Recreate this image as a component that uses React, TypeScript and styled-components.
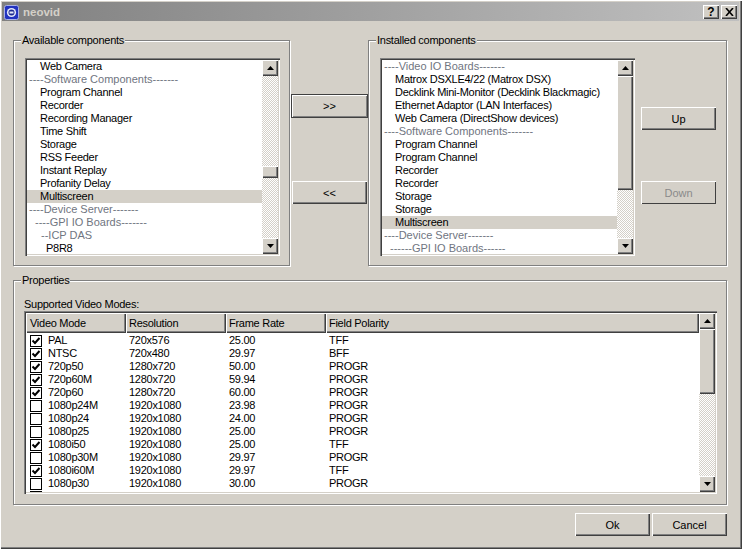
import React from 'react';
import styled, { createGlobalStyle } from 'styled-components';

const Global = createGlobalStyle`
  html, body {
    margin: 0;
    padding: 0;
    background: #d4d0c8;
  }
  * {
    box-sizing: border-box;
  }
`;

const face = '#d4d0c8';
const raised = `inset 1px 1px 0 #fff, inset -1px -1px 0 #404040, inset -2px -2px 0 #808080`;
const sunken = `inset 1px 1px 0 #808080, inset 2px 2px 0 #404040, inset -1px -1px 0 #fff, inset -2px -2px 0 ${face}`;

const Window = styled.div`
  width: 742px;
  height: 549px;
  display: flex;
  flex-direction: column;
  background: ${face};
  font-family: 'Liberation Sans', Arial, sans-serif;
  font-size: 11px;
  letter-spacing: -0.27px;
  color: #000;
  overflow: hidden;
  box-shadow: inset 1px 1px 0 #fff, inset -1px -1px 0 #404040, inset -2px -2px 0 #808080;
  padding: 2px 3px 0 2px;
`;

const TitleBar = styled.div`
  height: 19px;
  flex: none;
  display: flex;
  align-items: center;
  padding: 0 2px;
  background: linear-gradient(90deg, #808080, #c0c0c0);
`;

const AppIcon = styled.svg`
  width: 15px;
  height: 15px;
  flex: none;
  margin-top: 1px;
`;

const TitleText = styled.span`
  margin-left: 4px;
  flex: 1;
  font-weight: bold;
  font-size: 11.5px;
  letter-spacing: 0;
  color: ${face};
`;

const CaptionButton = styled.div`
  width: 16px;
  height: 14px;
  margin: 1px 0 0 2px;
  background: ${face};
  box-shadow: ${raised};
  display: flex;
  align-items: center;
  justify-content: center;
  font-weight: bold;
  font-size: 12px;
  line-height: 12px;
  letter-spacing: 0;
  color: #000;
`;

const Body = styled.div`
  flex: 1;
  display: flex;
  flex-direction: column;
  padding: 19px 12px 0 11px;
`;

const TopRow = styled.div`
  display: flex;
  height: 226px;
  flex: none;
`;

const Group = styled.div<{ $width?: number }>`
  ${p => (p.$width ? `width: ${p.$width}px; flex: none;` : 'flex: 1;')}
  height: 100%;
  border: 1px solid #808080;
  box-shadow: inset 1px 1px 0 #fff, 1px 1px 0 #fff;
  display: flex;
  flex-direction: column;
`;

const GroupTitle = styled.div`
  align-self: flex-start;
  margin: -7px 0 0 7px;
  padding: 0 1px;
  height: 13px;
  line-height: 13px;
  background: ${face};
  color: #000;
`;

const MiddleColumn = styled.div`
  width: 78px;
  flex: none;
  display: flex;
  flex-direction: column;
  padding: 54px 0 0 2px;
`;

const Button = styled.div<{ $disabled?: boolean; $mt?: number; $h?: number }>`
  width: 75px;
  height: ${p => p.$h ?? 23}px;
  flex: none;
  margin-top: ${p => p.$mt ?? 0}px;
  background: ${face};
  box-shadow: ${p =>
    p.$disabled ? 'inset 1px 1px 0 #fff, inset -1px -1px 0 #404040' : raised};
  display: flex;
  align-items: center;
  justify-content: center;
  color: ${p => (p.$disabled ? '#8a8a8a' : '#000')};
  font-size: 11px;
  letter-spacing: 0;
`;

const DefaultButton = styled(Button)`
  width: 77px;
  margin-left: -1px;
  box-shadow: inset 0 0 0 1px #404040, inset 2px 2px 0 #fff, inset -2px -2px 0 #808080;
`;

const ListBody = styled.div<{ $right?: number }>`
  flex: 1;
  display: flex;
  padding: 11px ${p => p.$right ?? 0}px 0 11px;
  min-height: 0;
`;

const SideButtons = styled.div`
  width: 75px;
  margin-left: 6px;
  display: flex;
  flex-direction: column;
  padding-top: 49px;
`;

const Sunken = styled.div<{ $w?: number; $h: number }>`
  width: ${p => (p.$w ? `${p.$w}px` : '100%')};
  height: ${p => p.$h}px;
  flex: none;
  display: flex;
  background: #fff;
  padding: 2px;
  box-shadow: ${sunken};
  overflow: hidden;
`;

const ListRows = styled.div`
  flex: 1;
  min-width: 0;
  overflow: hidden;
`;

const Row = styled.div<{ $indent: number; $selected?: boolean; $muted?: boolean }>`
  height: 13px;
  line-height: 13px;
  padding-left: ${p => p.$indent}px;
  white-space: nowrap;
  background: ${p => (p.$selected ? face : 'transparent')};
  color: ${p => (p.$muted ? '#70757f' : '#000')};
  letter-spacing: ${p => (p.$muted ? '0' : '-0.27px')};
`;

const ScrollBar = styled.div`
  width: 16px;
  flex: none;
  display: flex;
  flex-direction: column;
  height: 100%;
`;

const ScrollButton = styled.div`
  height: 16px;
  flex: none;
  background: ${face};
  box-shadow: ${raised};
  display: flex;
  align-items: center;
  justify-content: center;
`;

const Track = styled.div`
  flex: 1;
  min-height: 0;
  background: repeating-conic-gradient(${face} 0 25%, #fff 0 50%) 0 0 / 2px 2px;
`;

const Thumb = styled.div<{ $top: number; $h: number }>`
  margin-top: ${p => p.$top}px;
  height: ${p => p.$h}px;
  background: ${face};
  box-shadow: ${raised};
`;

const Arrow = ({ up }: { up?: boolean }) => (
  <svg width="7" height="4" viewBox="0 0 7 4">
    <path d={up ? 'M3.5 0L7 4H0Z' : 'M0 0H7L3.5 4Z'} fill="#000" />
  </svg>
);

const Scroller = ({ top, height }: { top: number; height: number }) => (
  <ScrollBar>
    <ScrollButton>
      <Arrow up />
    </ScrollButton>
    <Track>
      <Thumb $top={top} $h={height} />
    </Track>
    <ScrollButton>
      <Arrow />
    </ScrollButton>
  </ScrollBar>
);

type Item = { text: string; indent: number; muted?: boolean; selected?: boolean };

const available: Item[] = [
  { text: 'Web Camera', indent: 13 },
  { text: '----Software Components-------', indent: 2, muted: true },
  { text: 'Program Channel', indent: 13 },
  { text: 'Recorder', indent: 13 },
  { text: 'Recording Manager', indent: 13 },
  { text: 'Time Shift', indent: 13 },
  { text: 'Storage', indent: 13 },
  { text: 'RSS Feeder', indent: 13 },
  { text: 'Instant Replay', indent: 13 },
  { text: 'Profanity Delay', indent: 13 },
  { text: 'Multiscreen', indent: 13, selected: true },
  { text: '----Device Server-------', indent: 2, muted: true },
  { text: '----GPI IO Boards-------', indent: 8, muted: true },
  { text: '--ICP DAS', indent: 14, muted: true },
  { text: 'P8R8', indent: 19 },
];

const installed: Item[] = [
  { text: '----Video IO Boards-------', indent: 2, muted: true },
  { text: 'Matrox DSXLE4/22 (Matrox DSX)', indent: 13 },
  { text: 'Decklink Mini-Monitor (Decklink Blackmagic)', indent: 13 },
  { text: 'Ethernet Adaptor (LAN Interfaces)', indent: 13 },
  { text: 'Web Camera (DirectShow devices)', indent: 13 },
  { text: '----Software Components-------', indent: 2, muted: true },
  { text: 'Program Channel', indent: 13 },
  { text: 'Program Channel', indent: 13 },
  { text: 'Recorder', indent: 13 },
  { text: 'Recorder', indent: 13 },
  { text: 'Storage', indent: 13 },
  { text: 'Storage', indent: 13 },
  { text: 'Multiscreen', indent: 13, selected: true },
  { text: '----Device Server-------', indent: 2, muted: true },
  { text: '------GPI IO Boards------', indent: 8, muted: true },
];

const modes: [boolean, string, string, string, string][] = [
  [true, 'PAL', '720x576', '25.00', 'TFF'],
  [true, 'NTSC', '720x480', '29.97', 'BFF'],
  [true, '720p50', '1280x720', '50.00', 'PROGR'],
  [true, '720p60M', '1280x720', '59.94', 'PROGR'],
  [true, '720p60', '1280x720', '60.00', 'PROGR'],
  [false, '1080p24M', '1920x1080', '23.98', 'PROGR'],
  [false, '1080p24', '1920x1080', '24.00', 'PROGR'],
  [false, '1080p25', '1920x1080', '25.00', 'PROGR'],
  [true, '1080i50', '1920x1080', '25.00', 'TFF'],
  [false, '1080p30M', '1920x1080', '29.97', 'PROGR'],
  [true, '1080i60M', '1920x1080', '29.97', 'TFF'],
  [false, '1080p30', '1920x1080', '30.00', 'PROGR'],
  [true, '1080i60', '1920x1080', '30.00', 'TFF'],
];

const PropertiesWrap = styled.div`
  height: 225px;
  margin-top: 14px;
  flex: none;
  display: flex;
`;

const PropertiesBody = styled.div`
  flex: 1;
  padding: 11px 9px 0 10px;
  display: flex;
  flex-direction: column;
  min-height: 0;
`;

const Caption = styled.div`
  height: 13px;
  line-height: 13px;
`;

const TableMain = styled.div`
  flex: 1;
  min-width: 0;
  display: flex;
  flex-direction: column;
  overflow: hidden;
`;

const HeaderRow = styled.div`
  display: flex;
  height: 20px;
  flex: none;
`;

const HeaderCell = styled.div<{ $w?: number }>`
  ${p => (p.$w ? `width: ${p.$w}px; flex: none;` : 'flex: 1;')}
  background: ${face};
  box-shadow: ${raised};
  line-height: 20px;
  padding-left: 3px;
  white-space: nowrap;

  &:first-child {
    padding-left: 4px;
  }
`;

const DataRows = styled.div`
  padding-top: 1px;
`;

const DataRow = styled.div`
  display: flex;
  height: 13px;
  line-height: 13px;
  white-space: nowrap;
`;

const ModeCell = styled.div`
  width: 100px;
  flex: none;
  display: flex;
  align-items: center;
  padding-left: 4px;
`;

const CheckBox = styled.div`
  width: 12px;
  height: 12px;
  flex: none;
  border: 1px solid #000;
  background: #fff;
  margin-right: 6px;
  display: flex;
  align-items: center;
  justify-content: center;
`;

const Cell = styled.div<{ $w?: number }>`
  ${p => (p.$w ? `width: ${p.$w}px; flex: none;` : 'flex: 1;')}
  padding-left: 3px;
`;

const Footer = styled.div`
  display: flex;
  justify-content: flex-end;
  gap: 2px;
  margin-top: 8px;
`;

const App = () => (
  <>
    <Global />
    <Window>
      <TitleBar>
        <AppIcon viewBox="0 0 15 15">
          <rect x="0.5" y="0.5" width="14" height="14" rx="2" fill="#2233c0" stroke="#a8b0e8" />
          <circle cx="7.5" cy="7.5" r="4.6" fill="#e4e8fa" />
          <circle cx="7.5" cy="7.5" r="3" fill="#1c2a90" />
          <rect x="5.5" y="6.5" width="4" height="2" fill="#e4e8fa" />
        </AppIcon>
        <TitleText>neovid</TitleText>
        <CaptionButton>?</CaptionButton>
        <CaptionButton>
          <svg width="9" height="8" viewBox="0 0 9 8">
            <path d="M1 0L8 8M8 0L1 8" stroke="#000" strokeWidth="1.6" fill="none" />
          </svg>
        </CaptionButton>
      </TitleBar>
      <Body>
        <TopRow>
          <Group $width={277}>
            <GroupTitle>Available components</GroupTitle>
            <ListBody $right={9}>
              <Sunken $h={198}>
                <ListRows>
                  {available.map((r, i) => (
                    <Row key={i} $indent={r.indent} $muted={r.muted} $selected={r.selected}>
                      {r.text}
                    </Row>
                  ))}
                </ListRows>
                <Scroller top={90} height={12} />
              </Sunken>
            </ListBody>
          </Group>
          <MiddleColumn>
            <DefaultButton $h={24}>&gt;&gt;</DefaultButton>
            <Button $mt={63}>&lt;&lt;</Button>
          </MiddleColumn>
          <Group>
            <GroupTitle>Installed components</GroupTitle>
            <ListBody>
              <Sunken $w={255} $h={198}>
                <ListRows>
                  {installed.map((r, i) => (
                    <Row key={i} $indent={r.indent} $muted={r.muted} $selected={r.selected}>
                      {r.text}
                    </Row>
                  ))}
                </ListRows>
                <Scroller top={0} height={114} />
              </Sunken>
              <SideButtons>
                <Button>Up</Button>
                <Button $disabled $mt={51}>Down</Button>
              </SideButtons>
            </ListBody>
          </Group>
        </TopRow>
        <PropertiesWrap>
          <Group>
            <GroupTitle>Properties</GroupTitle>
            <PropertiesBody>
              <Caption>Supported Video Modes:</Caption>
              <Sunken $h={183}>
                <TableMain>
                  <HeaderRow>
                    <HeaderCell $w={100}>Video Mode</HeaderCell>
                    <HeaderCell $w={100}>Resolution</HeaderCell>
                    <HeaderCell $w={100}>Frame Rate</HeaderCell>
                    <HeaderCell>Field Polarity</HeaderCell>
                  </HeaderRow>
                  <DataRows>
                    {modes.map((m, i) => (
                      <DataRow key={i}>
                        <ModeCell>
                          <CheckBox>
                            {m[0] && (
                              <svg width="10" height="10" viewBox="0 0 10 10">
                                <path d="M1.5 4.5L4 7L8.5 2" stroke="#000" strokeWidth="2" fill="none" />
                              </svg>
                            )}
                          </CheckBox>
                          {m[1]}
                        </ModeCell>
                        <Cell $w={100}>{m[2]}</Cell>
                        <Cell $w={100}>{m[3]}</Cell>
                        <Cell>{m[4]}</Cell>
                      </DataRow>
                    ))}
                  </DataRows>
                </TableMain>
                <Scroller top={0} height={65} />
              </Sunken>
            </PropertiesBody>
          </Group>
        </PropertiesWrap>
        <Footer>
          <Button>Ok</Button>
          <Button>Cancel</Button>
        </Footer>
      </Body>
    </Window>
  </>
);

export default App;
